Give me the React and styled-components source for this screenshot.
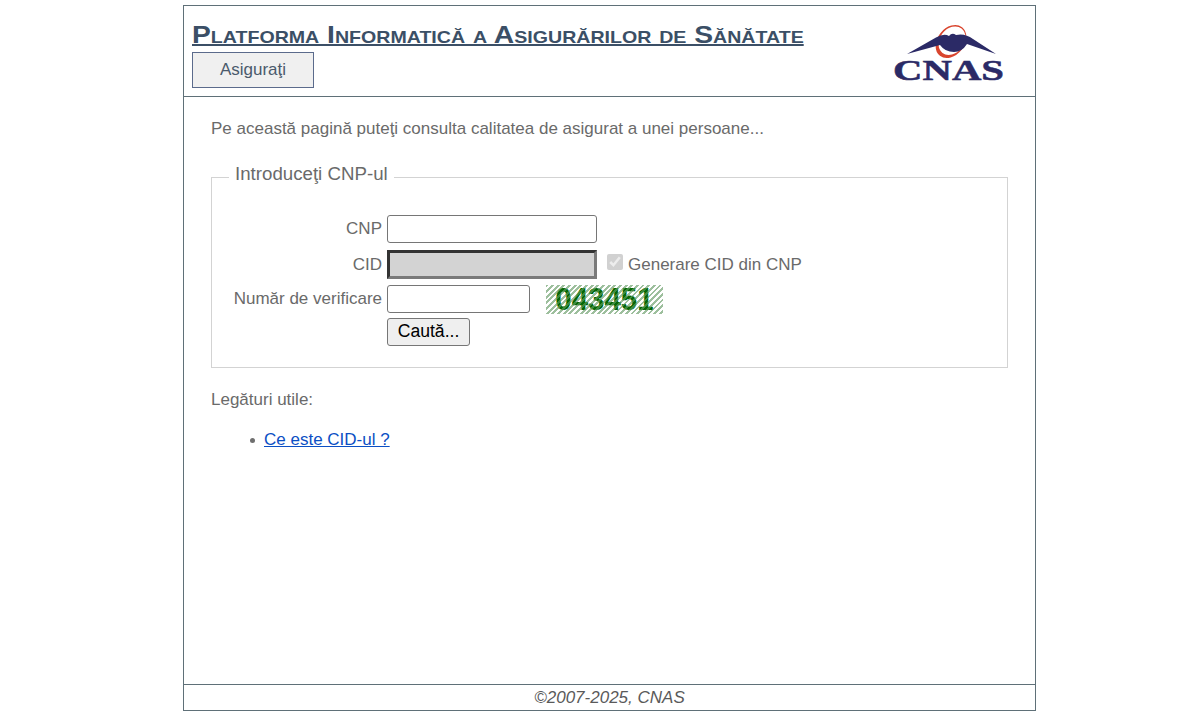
import React from "react";
import styled, { createGlobalStyle } from "styled-components";

const Global = createGlobalStyle`
  html, body { margin: 0; padding: 0; background: #fff; }
  body { font-family: "Liberation Sans", Arial, sans-serif; font-size: 17px; color: #6a6a6a; }
`;

const Page = styled.div`
  box-sizing: border-box;
  width: 853px;
  height: 706px;
  margin: 5px 0 0 183px;
  border: 1px solid #5f7078;
  display: flex;
  flex-direction: column;
`;

const Header = styled.header`
  box-sizing: border-box;
  height: 91px;
  flex: none;
  border-bottom: 1px solid #5f7078;
  padding: 13px 0 0 8px;
  display: flex;
  justify-content: space-between;
`;

const HeaderLeft = styled.div`
  display: flex;
  flex-direction: column;
  align-items: flex-start;
`;

const Title = styled.h1`
  margin: 0;
  font-size: 24.5px;
  line-height: 32px;
  font-weight: 700;
  font-variant: small-caps;
  transform: scaleX(1.152);
  transform-origin: left center;
  color: #3b4f66;
  text-decoration: underline;
  text-decoration-thickness: 2px;
  white-space: nowrap;
`;

const Tab = styled.div`
  box-sizing: border-box;
  width: 122px;
  height: 36px;
  margin-top: 1px;
  border: 1px solid #5b6b8c;
  background: #f0f0f0;
  color: #4a5a6c;
  display: flex;
  align-items: center;
  justify-content: center;
`;

const LogoSvg = styled.svg`
  display: block;
  flex: none;
  width: 120px;
  height: 62px;
  margin: 3px 25px 0 0;
  overflow: visible;
`;

const Main = styled.main`
  flex: 1;
  padding: 22px 27px 0;
`;

const Intro = styled.p`
  margin: 0;
  line-height: 19px;
`;

const Fieldset = styled.fieldset`
  box-sizing: border-box;
  width: 797px;
  height: 205px;
  margin: 25px 0 0;
  padding: 19px 0 0 21px;
  border: 1px solid #d3d3d3;
  min-inline-size: 0;
`;

const Legend = styled.legend`
  margin-left: -4px;
  padding: 0 6px 8px;
  font-size: 18.7px;
  line-height: 21px;
`;

const FormGrid = styled.div`
  display: grid;
  grid-template-columns: 149px auto;
  column-gap: 5px;
  justify-content: start;
  align-items: center;
`;

const Label = styled.label`
  text-align: right;
  white-space: nowrap;
`;

const Cell = styled.div`
  display: flex;
  align-items: center;
  height: ${(p) => p.$h}px;
`;

const TextInput = styled.input`
  box-sizing: border-box;
  width: ${(p) => p.$w}px;
  height: 28px;
  padding: 1px 2px;
  border: 1px solid #767676;
  border-radius: 3px;
  background: #fff;
`;

const DisabledInput = styled.input`
  box-sizing: border-box;
  width: 210px;
  height: 29px;
  padding: 1px 2px;
  border: 3px solid;
  border-color: #333 #7a7a7a #7a7a7a #333;
  border-radius: 0;
  background: #d3d3d3;
`;

const Check = styled.input`
  width: 16px;
  height: 16px;
  margin: 0 0 6px 10px;
`;

const CheckLabel = styled.label`
  margin-left: 5px;
`;

const Captcha = styled.div`
  position: relative;
  width: 117px;
  height: 29px;
  margin-left: 16px;
  background: repeating-linear-gradient(135deg, #82ad82 0 2px, #fff 2px 4px);
  color: #066806;
  font-weight: 700;
  font-size: 32px;
  line-height: 29px;
  text-align: center;
  &::after {
    content: "";
    position: absolute;
    inset: 0;
    background: repeating-linear-gradient(135deg, rgba(255, 255, 255, 0.22) 0 2px, transparent 2px 4px);
  }
`;

const CaptchaDigits = styled.span`
  display: inline-block;
  transform: scaleX(0.92);
`;

const SearchButton = styled.button`
  box-sizing: border-box;
  width: 83px;
  height: 28px;
  padding: 0;
  border: 1px solid #767676;
  border-radius: 3px;
  background: #efefef;
  color: #000;
  font: 17.6px "Liberation Sans", Arial, sans-serif;
`;

const UsefulTitle = styled.p`
  margin: 22px 0 0;
  line-height: 19px;
`;

const LinkList = styled.ul`
  margin: 21px 0 0;
  padding-left: 39px;
  list-style: none;
  line-height: 19px;
`;

const LinkItem = styled.li`
  display: flex;
  align-items: center;
  gap: 9px;
  &::before {
    content: "";
    width: 5px;
    height: 5px;
    margin-top: 1px;
    border-radius: 50%;
    background: #6f6f6f;
  }
`;

const Anchor = styled.a`
  color: #0b4fc4;
  text-decoration: underline;
`;

const Footer = styled.footer`
  box-sizing: border-box;
  height: 26px;
  flex: none;
  border-top: 1px solid #5f7078;
  text-align: center;
  font-style: italic;
  line-height: 26px;
  color: #5a5a5a;
`;

const Logo = () => (
  <LogoSvg viewBox="0 0 120 62" aria-label="CNAS">
    <ellipse cx="61" cy="19.5" rx="13.5" ry="18" transform="rotate(38 61 19.5)" fill="#d9452e" />
    <ellipse cx="62" cy="18.7" rx="12" ry="15.5" transform="rotate(38 62 18.7)" fill="#fff" />
    <path d="M17 32 L46 15.5 Q54 11 59 14 Q62 10 66 13 Q75 11 83 17 L106 32 L77 22 Q72 30 64 30 Q55 30 50 23 Z" fill="#2b2a66" />
    <text x="58.5" y="58" textAnchor="middle" fontFamily="Liberation Serif, serif" fontWeight="700" fontSize="30" textLength="111" lengthAdjust="spacingAndGlyphs" fill="#2b2a66" stroke="#2b2a66" strokeWidth="0.5">CNAS</text>
  </LogoSvg>
);

export default function App() {
  return (
    <>
      <Global />
      <Page>
        <Header>
          <HeaderLeft>
            <Title>Platforma Informatică a Asigurărilor de Sănătate</Title>
            <Tab>Asiguraţi</Tab>
          </HeaderLeft>
          <Logo />
        </Header>
        <Main>
          <Intro>Pe această pagină puteţi consulta calitatea de asigurat a unei persoane...</Intro>
          <Fieldset>
            <Legend>Introduceţi CNP-ul</Legend>
            <FormGrid>
              <Label>CNP</Label>
              <Cell $h={36}><TextInput $w={210} /></Cell>
              <Label>CID</Label>
              <Cell $h={35}>
                <DisabledInput disabled />
                <Check type="checkbox" checked disabled readOnly />
                <CheckLabel>Generare CID din CNP</CheckLabel>
              </Cell>
              <Label>Număr de verificare</Label>
              <Cell $h={34}>
                <TextInput $w={143} />
                <Captcha><CaptchaDigits>043451</CaptchaDigits></Captcha>
              </Cell>
              <span />
              <Cell $h={31}><SearchButton>Caută...</SearchButton></Cell>
            </FormGrid>
          </Fieldset>
          <UsefulTitle>Legături utile:</UsefulTitle>
          <LinkList>
            <LinkItem><Anchor href="#">Ce este CID-ul ?</Anchor></LinkItem>
          </LinkList>
        </Main>
        <Footer>©2007-2025, CNAS</Footer>
      </Page>
    </>
  );
}
